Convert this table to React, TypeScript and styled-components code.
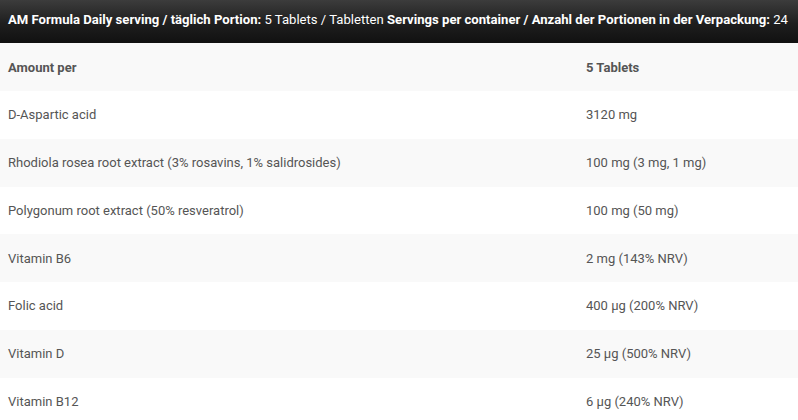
import React from "react";
import styled, { createGlobalStyle } from "styled-components";

const GlobalStyle = createGlobalStyle`
  body {
    margin: 0;
    background: #fff;
    font-family: Roboto, "Liberation Sans", Arial, sans-serif;
  }
`;

const Wrapper = styled.div`
  width: 798px;
  font-size: 13px;
`;

const TitleBar = styled.div`
  height: 43px;
  display: flex;
  align-items: center;
  padding: 0 8px 5px;
  box-sizing: border-box;
  background: linear-gradient(to bottom, #3c3c3c 0%, #1e1e1e 55%, #111 100%);
  color: #fff;
  font-size: 13.12px;
  white-space: nowrap;
  b {
    font-weight: 700;
  }
`;

const Table = styled.table`
  width: 100%;
  border-collapse: collapse;
`;

const Row = styled.tr<{ $shaded?: boolean; $head?: boolean }>`
  height: ${(p) => (p.$head ? "48px" : "47.75px")};
  background: ${(p) => (p.$shaded ? "#f9f9f9" : "#fff")};
`;

const Cell = styled.td<{ $head?: boolean }>`
  padding: 0 8px;
  color: #555;
  font-weight: ${(p) => (p.$head ? 700 : 400)};
  vertical-align: middle;
  &:first-child {
    width: 562px;
  }
`;

const rows: [string, string][] = [
  ["D-Aspartic acid", "3120 mg"],
  ["Rhodiola rosea root extract (3% rosavins, 1% salidrosides)", "100 mg (3 mg, 1 mg)"],
  ["Polygonum root extract (50% resveratrol)", "100 mg (50 mg)"],
  ["Vitamin B6", "2 mg (143% NRV)"],
  ["Folic acid", "400 µg (200% NRV)"],
  ["Vitamin D", "25 µg (500% NRV)"],
  ["Vitamin B12", "6 µg (240% NRV)"],
];

export default function App() {
  return (
    <Wrapper>
      <GlobalStyle />
      <TitleBar>
        <span>
          <b>AM Formula Daily serving / täglich Portion:</b> 5 Tablets / Tabletten{" "}
          <b>Servings per container / Anzahl der Portionen in der Verpackung:</b> 24
        </span>
      </TitleBar>
      <Table>
        <tbody>
          <Row $shaded $head>
            <Cell $head>Amount per</Cell>
            <Cell $head>5 Tablets</Cell>
          </Row>
          {rows.map(([name, amount], i) => (
            <Row key={name} $shaded={i % 2 === 1}>
              <Cell>{name}</Cell>
              <Cell>{amount}</Cell>
            </Row>
          ))}
        </tbody>
      </Table>
    </Wrapper>
  );
}
